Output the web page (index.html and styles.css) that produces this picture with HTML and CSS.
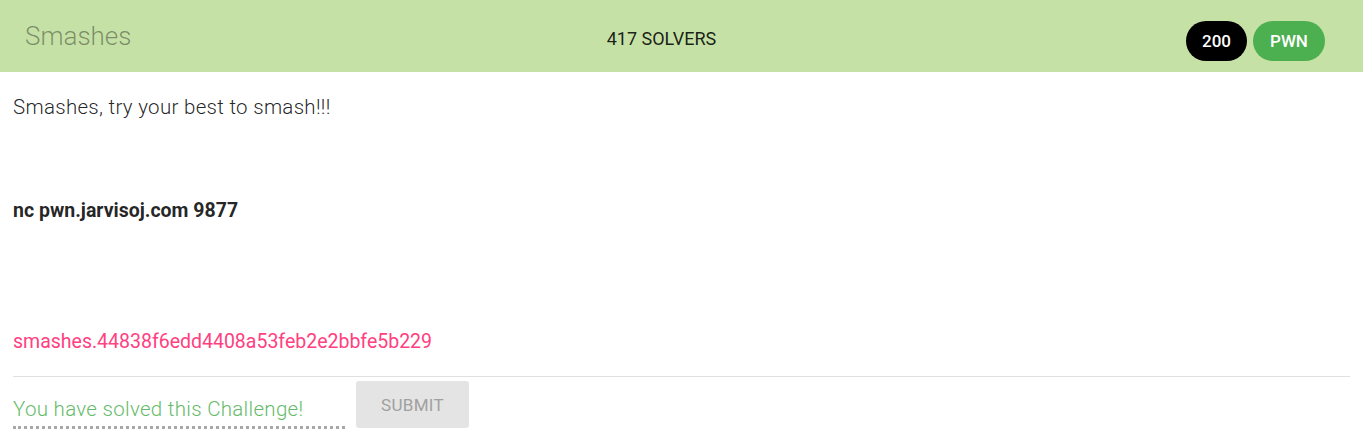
FILE: index.html
```html
<!DOCTYPE html>
<html>
<head>
<meta charset="utf-8">
<link rel="stylesheet" href="styles.css">
</head>
<body>
<header class="header">
  <div class="title">Smashes</div>
  <div class="solvers">417 SOLVERS</div>
  <div class="badges">
    <span class="badge badge-score">200</span>
    <span class="badge badge-cat">PWN</span>
  </div>
</header>
<main class="content">
  <p class="desc">Smashes, try your best to smash!!!</p>
  <p class="desc bold cmd">nc pwn.jarvisoj.com 9877</p>
  <p class="file">smashes.44838f6edd4408a53feb2e2bbfe5b229</p>
  <div class="divider"></div>
  <div class="flag-row">
    <div class="flag-input">You have solved this Challenge!</div>
    <button class="submit">SUBMIT</button>
  </div>
</main>
</body>
</html>
```
FILE: styles.css
```css
html, body {
  margin: 0;
  padding: 0;
  background: #fff;
  font-family: Roboto, "Noto Sans", sans-serif;
}
.header {
  height: 72px;
  background: #c5e1a5;
  display: grid;
  grid-template-columns: 1fr auto 1fr;
  align-items: center;
  padding: 0 38px 0 25px;
}
.title {
  font-size: 26px;
  font-weight: 300;
  color: rgba(0, 0, 0, 0.38);
  margin-top: -1px;
}
.solvers {
  font-size: 18px;
  color: rgba(0, 0, 0, 0.87);
  margin-right: 27px;
  margin-top: 4px;
}
.badges {
  display: flex;
  justify-content: flex-end;
  gap: 6px;
  margin-top: 10px;
}
.badge {
  height: 40px;
  border-radius: 20px;
  display: flex;
  align-items: center;
  justify-content: center;
  color: #fff;
  font-size: 17px;
  font-weight: 500;
}
.badge-score {
  background: #000;
  width: 61px;
}
.badge-cat {
  background: #4caf50;
  width: 72px;
}
.content {
  padding: 0 13px;
}
.desc {
  margin: 0;
  font-size: 19.5px;
  line-height: 27px;
  color: rgba(0, 0, 0, 0.87);
  padding-top: 94px;
}
.content > .desc:first-child {
  padding-top: 22px;
  font-size: 20.5px;
  font-weight: 300;
  letter-spacing: 0.3px;
}
.bold {
  font-weight: 700;
}
.cmd {
  padding-top: 76px;
}
.file {
  margin: 0;
  padding-top: 104px;
  font-size: 19.5px;
  line-height: 27px;
  color: #ff4081;
}
.divider {
  margin-top: 21px;
  height: 1px;
  background: #e0e0e0;
}
.flag-row {
  display: flex;
  align-items: flex-start;
  gap: 11px;
  padding-top: 4px;
}
.flag-input {
  width: 332px;
  height: 48px;
  box-sizing: border-box;
  padding-top: 15px;
  font-size: 20.5px;
  font-weight: 300;
  line-height: 27px;
  letter-spacing: 0.3px;
  color: #66bb6a;
  border-bottom: 3px dotted #a8a8a8;
}
.submit {
  width: 113px;
  height: 47px;
  border: none;
  border-radius: 3px;
  background: #e4e4e4;
  color: #a0a0a0;
  font-family: Roboto, sans-serif;
  font-size: 17px;
  letter-spacing: 0.3px;
  padding: 0;
}
```
